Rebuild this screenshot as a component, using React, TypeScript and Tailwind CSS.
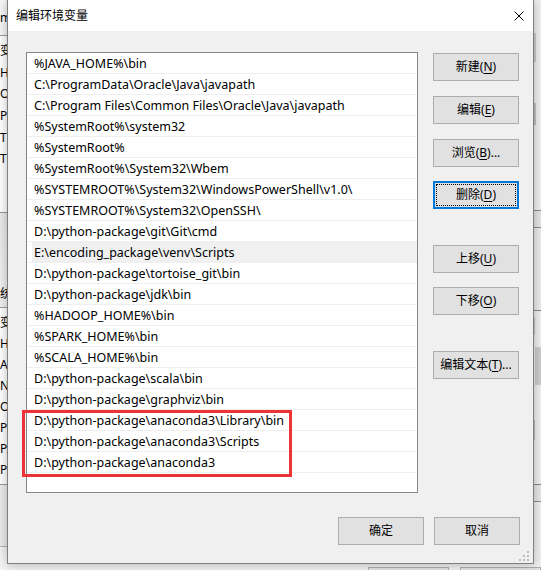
import { ReactNode } from "react";

const paths = [
  "%JAVA_HOME%\\bin",
  "C:\\ProgramData\\Oracle\\Java\\javapath",
  "C:\\Program Files\\Common Files\\Oracle\\Java\\javapath",
  "%SystemRoot%\\system32",
  "%SystemRoot%",
  "%SystemRoot%\\System32\\Wbem",
  "%SYSTEMROOT%\\System32\\WindowsPowerShell\\v1.0\\",
  "%SYSTEMROOT%\\System32\\OpenSSH\\",
  "D:\\python-package\\git\\Git\\cmd",
  "E:\\encoding_package\\venv\\Scripts",
  "D:\\python-package\\tortoise_git\\bin",
  "D:\\python-package\\jdk\\bin",
  "%HADOOP_HOME%\\bin",
  "%SPARK_HOME%\\bin",
  "%SCALA_HOME%\\bin",
  "D:\\python-package\\scala\\bin",
  "D:\\python-package\\graphviz\\bin",
  "D:\\python-package\\anaconda3\\Library\\bin",
  "D:\\python-package\\anaconda3\\Scripts",
  "D:\\python-package\\anaconda3",
];

// what peeks out of the parent window on the left edge
const userVars = ["变", "HA", "O", "Pa", "TE", "TM"];
const sysVars = ["变", "HA", "A", "N", "O", "Pa", "PA", "PR"];

const Btn = ({ children, focused = false, className = "" }: { children: ReactNode; focused?: boolean; className?: string }) => (
  <div
    className={`relative flex h-[28px] w-[86px] items-center justify-center bg-[#e1e1e1] text-[12px] text-black ${
      focused ? "border-2 border-[#0078d7]" : "border border-[#adadad]"
    } ${className}`}
  >
    {focused && <span className="absolute inset-[1px] border border-dotted border-black" />}
    <span className="leading-none">{children}</span>
  </div>
);

const Key = ({ k }: { k: string }) => <span className="underline underline-offset-[2px]">{k}</span>;

export default function App() {
  return (
    <div
      className="relative h-[570px] w-[541px] overflow-hidden bg-[#f0f0f0]"
      style={{ fontFamily: '"Noto Sans", "Noto Sans CJK SC", sans-serif' }}
    >
      {/* parent window behind the dialog */}
      <div className="absolute inset-0 text-[12px] text-black">
        <div className="absolute left-0 top-0 flex w-[7px] flex-col overflow-hidden">
          <div className="flex h-[35px] items-center overflow-hidden bg-[#f7f7f7]">m</div>
          <div className="flex h-[178px] flex-col border-y border-[#9a9a9a] bg-white pt-[4px]">
            {userVars.map((v, i) => (
              <div key={i} className="flex h-[21.7px] items-center overflow-hidden whitespace-nowrap">
                {v}
              </div>
            ))}
          </div>
          <div className="h-[68px] bg-gradient-to-b from-[#e9e9e9] to-[#f0f0f0]" />
          <div className="flex h-[26px] items-center overflow-hidden whitespace-nowrap">统</div>
          <div className="flex h-[178px] flex-col border-y border-[#9a9a9a] bg-white pt-[4px]">
            {sysVars.map((v, i) => (
              <div key={i} className="flex h-[21px] items-center overflow-hidden whitespace-nowrap">
                {v}
              </div>
            ))}
          </div>
          <div className="h-[61px] bg-[#ececec]" />
          <div className="h-[30px] border-t border-[#b5b5b5] bg-[#f4f4f4]" />
        </div>

        <div className="absolute left-[533px] top-0 flex w-[8px] flex-col">
          <div className="h-[30px] bg-[#f0f0f0]" />
          <div className="flex h-[180px] flex-col border-l border-[#a0a0a0] bg-[#f0f0f0] pt-[3px]">
            <div className="h-[29px] w-[2px] bg-[#cdcdcd]" />
            <div className="mt-[41px] h-[22px] w-[2px] bg-[#c2c2c2]" />
          </div>
          <div className="h-[18px] border-y border-[#8a8a8a] bg-[#e6e6e6]" />
          <div className="h-[82px] bg-[#ececec]" />
          <div className="flex h-[175px] flex-col border-y border-[#8a8a8a] bg-[#f0f0f0] pt-[6px]">
            <div className="h-[18px] w-[2px] bg-[#c6c6c6]" />
            <div className="ml-[2px] mt-[12px] h-[38px] w-[6px] bg-[#cdcdcd]" />
            <div className="mt-[35px] h-[20px] w-[2px] bg-[#c2c2c2]" />
          </div>
          <div className="h-[17px] border-b border-[#8a8a8a] bg-[#e8e8e8]" />
        </div>

        <div className="absolute left-0 top-[564px] flex h-[6px] w-full">
          <div className="ml-[368px] mt-[3px] h-[10px] w-[84px] border border-[#adadad] bg-[#e1e1e1]" />
          <div className="ml-[11px] mt-[3px] h-[10px] w-[84px] border border-[#adadad] bg-[#e1e1e1]" />
        </div>
      </div>

      {/* dialog */}
      <div className="absolute left-[7px] top-0 flex h-[564px] w-[527px] flex-col border-x border-b border-[#7f7f7f] bg-[#f0f0f0] shadow-[0_0_10px_rgba(0,0,0,0.28)]">
        <div className="flex h-[31px] items-center justify-between bg-white pl-[8px] pr-[9px]">
          <span className="text-[12px] text-black">编辑环境变量</span>
          <svg width="10" height="10" viewBox="0 0 10 10">
            <path d="M0.5 0.5 L9.5 9.5 M9.5 0.5 L0.5 9.5" stroke="#000" strokeWidth="1" fill="none" />
          </svg>
        </div>

        <div className="relative flex flex-1 flex-col">
          <div className="ml-[18px] mt-[21px] flex">
            <div className="relative h-[441px] w-[392px] border border-[#828790] bg-white">
              {paths.map((p, i) => (
                <div key={p} className="flex h-[21px] border-b border-[#efefef] pl-[5px]">
                  <div
                    className={`flex flex-1 items-center whitespace-nowrap pl-[2px] pt-[2px] text-[12.5px] text-black ${
                      i === 9 ? "bg-[#f0f0f0]" : ""
                    }`}
                  >
                    {p}
                  </div>
                </div>
              ))}
              <div className="absolute left-[-5px] top-[357px] h-[67px] w-[270px] border-[3px] border-[#ee3338]" />
            </div>

            <div className="ml-[15px] flex flex-col">
              <Btn className="mt-[1px]">新建(<Key k="N" />)</Btn>
              <Btn className="mt-[15px]">编辑(<Key k="E" />)</Btn>
              <Btn className="mt-[15px]">浏览(<Key k="B" />)...</Btn>
              <Btn className="mt-[14px]" focused>删除(<Key k="D" />)</Btn>
              <Btn className="mt-[36px]">上移(<Key k="U" />)</Btn>
              <Btn className="mt-[14px]">下移(<Key k="O" />)</Btn>
              <Btn className="mt-[36px]">编辑文本(<Key k="T" />)...</Btn>
            </div>
          </div>

          <div className="mt-[24px] flex justify-end gap-[10px] pr-[13px]">
            <Btn>确定</Btn>
            <Btn>取消</Btn>
          </div>

          <svg className="absolute bottom-[1px] right-[3px]" width="11" height="11" viewBox="0 0 11 11">
            <rect x="8" y="0" width="2" height="2" fill="#bdbdbd" />
            <rect x="4" y="4" width="2" height="2" fill="#bdbdbd" />
            <rect x="8" y="4" width="2" height="2" fill="#bdbdbd" />
            <rect x="0" y="8" width="2" height="2" fill="#bdbdbd" />
            <rect x="4" y="8" width="2" height="2" fill="#bdbdbd" />
            <rect x="8" y="8" width="2" height="2" fill="#bdbdbd" />
          </svg>
        </div>
      </div>
    </div>
  );
}
